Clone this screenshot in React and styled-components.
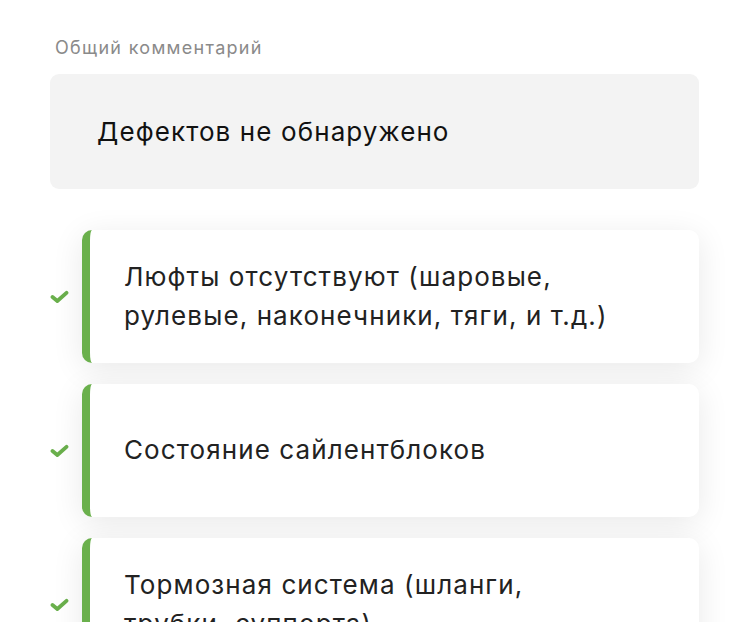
import React from 'react'
import styled, { createGlobalStyle } from 'styled-components'

const Global = createGlobalStyle`
body{
  margin:0;
  background:#fff;
  font-family:Inter, "Noto Sans", sans-serif;
}
`;

const Page = styled.div`
width:750px;
height:622px;
overflow:hidden;
padding:36px 51px 0 50px;
box-sizing:border-box;
`;

const Label = styled.div`
font-size:18px;
letter-spacing:1.3px;
color:#8a8a8a;
margin-left:5px;
line-height:24px;
`;

const Comment = styled.div`
margin-top:14px;
height:115px;
background-color:#f3f3f3;
border-radius:9px;
display:flex;
align-items:center;
padding-left:47px;
font-size:26px;
letter-spacing:1.1px;
color:#111;
`;

const List = styled.div`
margin-top:41px;
display:flex;
flex-direction:column;
gap:21px;
`;

const Row = styled.div`
display:flex;
align-items:center;
`;

const Check = styled.div`
width:32px;
flex-shrink:0;
display:flex;
align-items:center;
`;

const Card = styled.div`
flex:1;
min-height:133px;
box-sizing:border-box;
background:#fff;
border-radius:10px;
border-left:8px solid #6ab04c;
box-shadow:0 6px 32px rgba(0,0,0,0.09);
display:flex;
align-items:center;
padding:17px 76px 19px 34px;
font-size:26px;
letter-spacing:1.1px;
line-height:39px;
color:#222;
`;

const CheckIcon = () => (
  <svg width="19" height="14" viewBox="0 0 19 14">
    <path d="M2.5 7 L7.3 11 L16.5 2.8" fill="none" stroke="#6ab04c" strokeWidth="3.8" strokeLinecap="round" strokeLinejoin="round" />
  </svg>
);

const items = [
  'Люфты отсутствуют (шаровые, рулевые, наконечники, тяги, и т.д.)',
  'Состояние сайлентблоков',
  'Тормозная система (шланги, трубки, суппорта)',
];

const App = () => {
  return (
    <Page>
      <Global />
      <Label>Общий комментарий</Label>
      <Comment>Дефектов не обнаружено</Comment>
      <List>
        {items.map((t) => (
          <Row key={t}>
            <Check><CheckIcon /></Check>
            <Card>{t}</Card>
          </Row>
        ))}
      </List>
    </Page>
  )
}

export default App
